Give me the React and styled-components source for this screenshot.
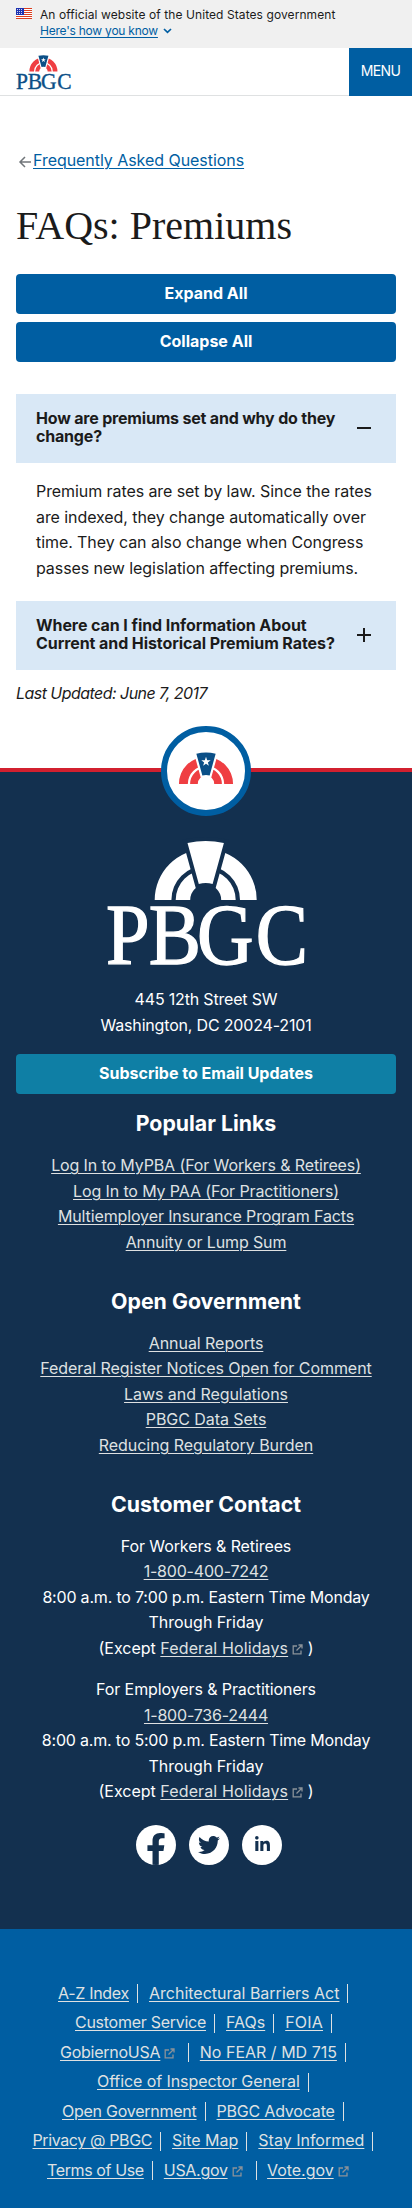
import React from "react";
import styled, { createGlobalStyle } from "styled-components";
import { FaFacebookF, FaTwitter, FaLinkedinIn } from "react-icons/fa";

const Global = createGlobalStyle`
  * { box-sizing: border-box; }
  body {
    margin: 0;
    background: #fff;
    color: #1b1b1b;
    font: 16px/25.6px Inter, "Liberation Sans", sans-serif;
  }
  h1, h2, p { margin: 0; }
  a { color: #005ea2; text-decoration: underline; text-underline-offset: 2px; text-decoration-thickness: 1px; }
`;

const Tracked = styled.span`
  letter-spacing: ${(p) => p.$by}px;
`;

const Banner = styled.div`
  height: 48px;
  background: #f0f0f0;
  padding: 7px 16px;
  display: flex;
  gap: 8px;
  font-size: 12px;
  line-height: 16px;
  letter-spacing: 0.08px;
  svg { flex: none; }
`;
const Flag = styled.svg`
  width: 16px;
  height: 11px;
  margin-top: 1px;
`;
const BannerLink = styled.div`
  display: flex;
  align-items: center;
  gap: 5px;
  letter-spacing: -0.23px;
`;

const Header = styled.header`
  height: 48px;
  display: flex;
  justify-content: space-between;
  border-bottom: 1px solid #dfe1e2;
`;
const HeaderLogo = styled.div`
  padding: 7px 16px;
`;
const MenuButton = styled.button`
  width: 63px;
  height: 48px;
  border: 0;
  padding: 0 0 3px;
  background: #005ea2;
  color: #fff;
  font: 14px/16px Inter, sans-serif;
  letter-spacing: -0.6px;
`;

const Main = styled.main`
  padding: 52px 16px 0;
  height: 672px;
`;
const BackLink = styled.div`
  display: flex;
  align-items: center;
  padding-left: 2px;
  letter-spacing: -0.05px;
`;
const Title = styled.h1`
  font: 400 40px/47px "Liberation Serif", serif;
  margin: 28px 0 25.4px;
`;
const Button = styled.button`
  display: block;
  width: 100%;
  height: 40px;
  margin-bottom: 8px;
  padding: 0 0 2px;
  border: 0;
  border-radius: 4px;
  background: ${(p) => p.$bg || "#005ea2"};
  color: #fff;
  font: 700 16px/16px Inter, sans-serif;
`;
const AccordionHeading = styled.h2`
  height: 69px;
  padding: 15px 20px 16px 20px;
  display: flex;
  justify-content: space-between;
  background: #d9e8f6;
  font-size: 16px;
  line-height: 18.5px;
  white-space: nowrap;
  letter-spacing: ${(p) => p.$track}px;
  svg { margin-top: 7px; flex: none; }
`;
const Accordions = styled.div`
  margin-top: 32px;
`;
const Answer = styled.p`
  padding: 16px 20px 19.6px;
  white-space: nowrap;
  letter-spacing: -0.08px;
`;
const Updated = styled.p`
  margin-top: 11px;
  font-style: italic;
  letter-spacing: -0.54px;
`;

const Footer = styled.footer`
  height: 1161px;
  border-top: 4px solid #d2202f;
  background: #13304f;
  color: #fff;
  text-align: center;
  padding: 0 16px;
  a { color: #dfe1e2; }
`;
const Medallion = styled.div`
  width: 90px;
  height: 90px;
  margin: -46px auto 24px;
  border: 6px solid #005ea2;
  border-radius: 50%;
  background: #fff;
  display: flex;
  justify-content: center;
  padding-top: 19px;
`;
const FooterLogo = styled.div`
  height: 126px;
  margin-bottom: 21px;
`;
const Address = styled.p`
  margin-bottom: 16px;
  letter-spacing: -0.18px;
`;
const FooterHeading = styled.h2`
  font-size: 21.3px;
  line-height: 26px;
  margin: ${(p) => p.$top || "32px"} 0 17px;
`;
const LinkList = styled.div`
  display: flex;
  flex-direction: column;
  align-items: center;
  white-space: nowrap;
  letter-spacing: ${(p) => p.$track || 0}px;
`;
const Contact = styled.p`
  margin-bottom: 15.5px;
  white-space: nowrap;
`;
const Social = styled.div`
  display: flex;
  justify-content: center;
  gap: 13px;
  padding-left: 6px;
  margin-top: 20px;
`;
const SocialIcon = styled.span`
  width: 40px;
  height: 40px;
  overflow: hidden;
  border-radius: 50%;
  background: #fff;
  color: #13304f;
  display: flex;
  align-items: center;
  justify-content: center;
  svg { flex: none; margin-top: ${(p) => p.$drop || "0"}; }
`;

const Identifier = styled.nav`
  height: 279px;
  padding-top: 50px;
  background: #005ea2;
  a { color: #dfe1e2; }
`;
const Row = styled.div`
  height: 29.5px;
  display: flex;
  align-items: center;
  padding-left: ${(p) => p.$left}px;
  white-space: nowrap;
`;
const Item = styled.span`
  display: flex;
  align-items: center;
  height: 19px;
  padding-right: ${(p) => (p.$ext ? 13 : 8)}px;
  margin-right: ${(p) => (p.$ext ? 10.5 : 11)}px;
  border-right: 1px solid ${(p) => (p.$last ? "transparent" : "#dfe1e2")};
  letter-spacing: ${(p) => p.$track}px;
`;
const ExtSvg = styled.svg`
  margin: 0 0 -1px 4px;
`;
const LogoSvg = styled.svg`
  display: block;
  margin: 0 auto;
  overflow: visible;
`;

const ExternalIcon = () => (
  <ExtSvg width="11" height="11" viewBox="0 0 11 11" fill="none" stroke="#8b9299" strokeWidth="1.3">
    <path d="M5 2H1.2v7.8H9V6.5M6.5 1H10v3.5M10 1L4.5 6.5" />
  </ExtSvg>
);

/* Striped arch with a keystone, centred on x=0 with its base on y=0 */
const Arch = ({ ring, keystone, gap, star }) => (
  <g>
    <path fill={ring} d="M-51 0A51 51 0 0 1 51 0H34.3A34.3 34.3 0 0 0-34.3 0Z" />
    <path fill={ring} d="M-30 0A30 30 0 0 1 30 0H15.5A15.5 15.5 0 0 0-15.5 0Z" />
    <path fill={keystone} stroke={gap} strokeWidth="8" paintOrder="stroke" d="M-18.2-57Q0-61 18.2-57L6.9-16Q0-18-6.9-16Z" />
    {star && (
      <path fill="#fff" d="M0-51l2.2 6.3 6.6.1-5.3 4 2 6.4L0-38l-5.5 3.8 2-6.4-5.3-4 6.6-.1Z" />
    )}
  </g>
);

const Logo = ({ width, ring, keystone, letters, gap, star }) => (
  <LogoSvg width={width} height={width * 0.63} viewBox="0 0 200 126">
    <g transform="translate(99.7 60)">
      <Arch ring={ring} keystone={keystone} gap={gap} star={star} />
    </g>
    <text
      transform="translate(0 123.5) scale(.9 1)"
      x="0 47.5 101 166.5"
      fontFamily="Liberation Serif, serif"
      fontSize="87"
      fill={letters}
      stroke={letters}
      strokeWidth="1.4"
    >
      PBGC
    </text>
  </LogoSvg>
);

const Hours = ({ who, phone, end }) => (
  <Contact>
    <Tracked $by={-0.1}>{who}</Tracked>
    <br />
    <Tracked $by={-0.2} as="a">{phone}</Tracked>
    <br />
    <Tracked $by={-0.19}>8:00 a.m. to {end} p.m. Eastern Time Monday</Tracked>
    <br />
    Through Friday
    <br />
    (Except <Tracked $by={0.12} as="a">Federal Holidays</Tracked>
    <ExternalIcon /> )
  </Contact>
);

const identifierRows = [
  [58, [["A-Z Index", -0.3], ["Architectural Barriers Act", 0]]],
  [75, [["Customer Service", -0.27], ["FAQs", 0], ["FOIA", 0.2]]],
  [60, [["GobiernoUSA*", -0.25], ["No FEAR / MD 715", 0]]],
  [97, [["Office of Inspector General", -0.08]]],
  [62, [["Open Government", -0.25], ["PBGC Advocate", -0.2]]],
  [32.5, [["Privacy @ PBGC", -0.38], ["Site Map", 0], ["Stay Informed", 0]]],
  [47, [["Terms of Use", -0.38], ["USA.gov*", -0.3], ["Vote.gov*", -0.05]]],
];

export default function App() {
  return (
    <>
      <Global />
      <Banner>
        <Flag viewBox="0 0 16 11">
          <path fill="#fff" d="M0 0h16v11H0z" />
          <path stroke="#db3e1f" d="M0 .5h16M0 2.5h16M0 4.5h16M0 6.5h16M0 8.5h16M0 10.5h16" />
          <path fill="#1e33b1" d="M0 0h8v7H0z" />
          <path stroke="#fff" strokeWidth=".8" strokeDasharray="1 1" d="M1 1.5h6M1 3.5h6M1 5.5h6" />
        </Flag>
        <div>
          An official website of the United States government
          <BannerLink>
            <a>Here's how you know</a>
            <svg width="9" height="6" viewBox="0 0 9 6" fill="none" stroke="#005ea2" strokeWidth="1.7">
              <path d="M1 1l3.5 3.3L8 1" />
            </svg>
          </BannerLink>
        </div>
      </Banner>
      <Header>
        <HeaderLogo>
          <Logo width={55} ring="#ef3e42" keystone="#0b4f87" letters="#0b4f87" gap="#fff" star />
        </HeaderLogo>
        <MenuButton>MENU</MenuButton>
      </Header>
      <Main>
        <BackLink>
          <svg width="15" height="14" viewBox="0 0 15 14" fill="none" stroke="#71767a" strokeWidth="1.5">
            <path d="M13 8H2M7 3L2 8l5 5" />
          </svg>
          <a>Frequently Asked Questions</a>
        </BackLink>
        <Title>FAQs: Premiums</Title>
        <Button>Expand All</Button>
        <Button>Collapse All</Button>
        <Accordions>
          <AccordionHeading $track={-0.19}>
            <span>
              How are premiums set and why do they
              <br />
              change?
            </span>
            <svg width="24" height="24" viewBox="0 0 24 24" fill="#1b1b1b">
              <path d="M19 13H5v-2h14z" />
            </svg>
          </AccordionHeading>
          <Answer>
            Premium rates are set by law. Since the rates
            <br />
            are indexed, they change automatically over
            <br />
            time. They can also change when Congress
            <br />
            passes new legislation affecting premiums.
          </Answer>
          <AccordionHeading $track={-0.08}>
            <span>
              Where can I find Information About
              <br />
              Current and Historical Premium Rates?
            </span>
            <svg width="24" height="24" viewBox="0 0 24 24" fill="#1b1b1b">
              <path d="M19 13h-6v6h-2v-6H5v-2h6V5h2v6h6z" />
            </svg>
          </AccordionHeading>
        </Accordions>
        <Updated>Last Updated: June 7, 2017</Updated>
      </Main>
      <Footer>
        <Medallion>
          <svg width="56" height="34" viewBox="-52.8 -62 105.6 64">
            <Arch ring="#ef3e42" keystone="#0b4f87" gap="#fff" star />
          </svg>
        </Medallion>
        <FooterLogo>
          <Logo width={200} ring="#fff" keystone="#fff" letters="#fff" gap="#13304f" />
        </FooterLogo>
        <Address>
          445 12th Street SW
          <br />
          Washington, DC 20024-2101
        </Address>
        <Button $bg="#0f7fa5">Subscribe to Email Updates</Button>
        <FooterHeading $top="16px">Popular Links</FooterHeading>
        <LinkList $track={-0.12}>
          <a>Log In to MyPBA (For Workers &amp; Retirees)</a>
          <a>Log In to My PAA (For Practitioners)</a>
          <a>Multiemployer Insurance Program Facts</a>
          <a>Annuity or Lump Sum</a>
        </LinkList>
        <FooterHeading>Open Government</FooterHeading>
        <LinkList $track={-0.05}>
          <a>Annual Reports</a>
          <a>Federal Register Notices Open for Comment</a>
          <a>Laws and Regulations</a>
          <a>PBGC Data Sets</a>
          <a>Reducing Regulatory Burden</a>
        </LinkList>
        <FooterHeading>Customer Contact</FooterHeading>
        <Hours who="For Workers &amp; Retirees" phone="1-800-400-7242" end="7:00" />
        <Hours who="For Employers &amp; Practitioners" phone="1-800-736-2444" end="5:00" />
        <Social>
          <SocialIcon $drop="9px">
            <FaFacebookF size={32} />
          </SocialIcon>
          <SocialIcon>
            <FaTwitter size={22} />
          </SocialIcon>
          <SocialIcon>
            <FaLinkedinIn size={17} />
          </SocialIcon>
        </Social>
      </Footer>
      <Identifier>
        {identifierRows.map(([left, items], r) => (
          <Row key={left} $left={left}>
            {items.map(([t, track], i) => {
              const ext = t.endsWith("*");
              return (
                <Item key={t} $ext={ext} $track={track} $last={r === 6 && i === 2}>
                  <a>{t.replace("*", "")}</a>
                  {ext && <ExternalIcon />}
                </Item>
              );
            })}
          </Row>
        ))}
      </Identifier>
    </>
  );
}
